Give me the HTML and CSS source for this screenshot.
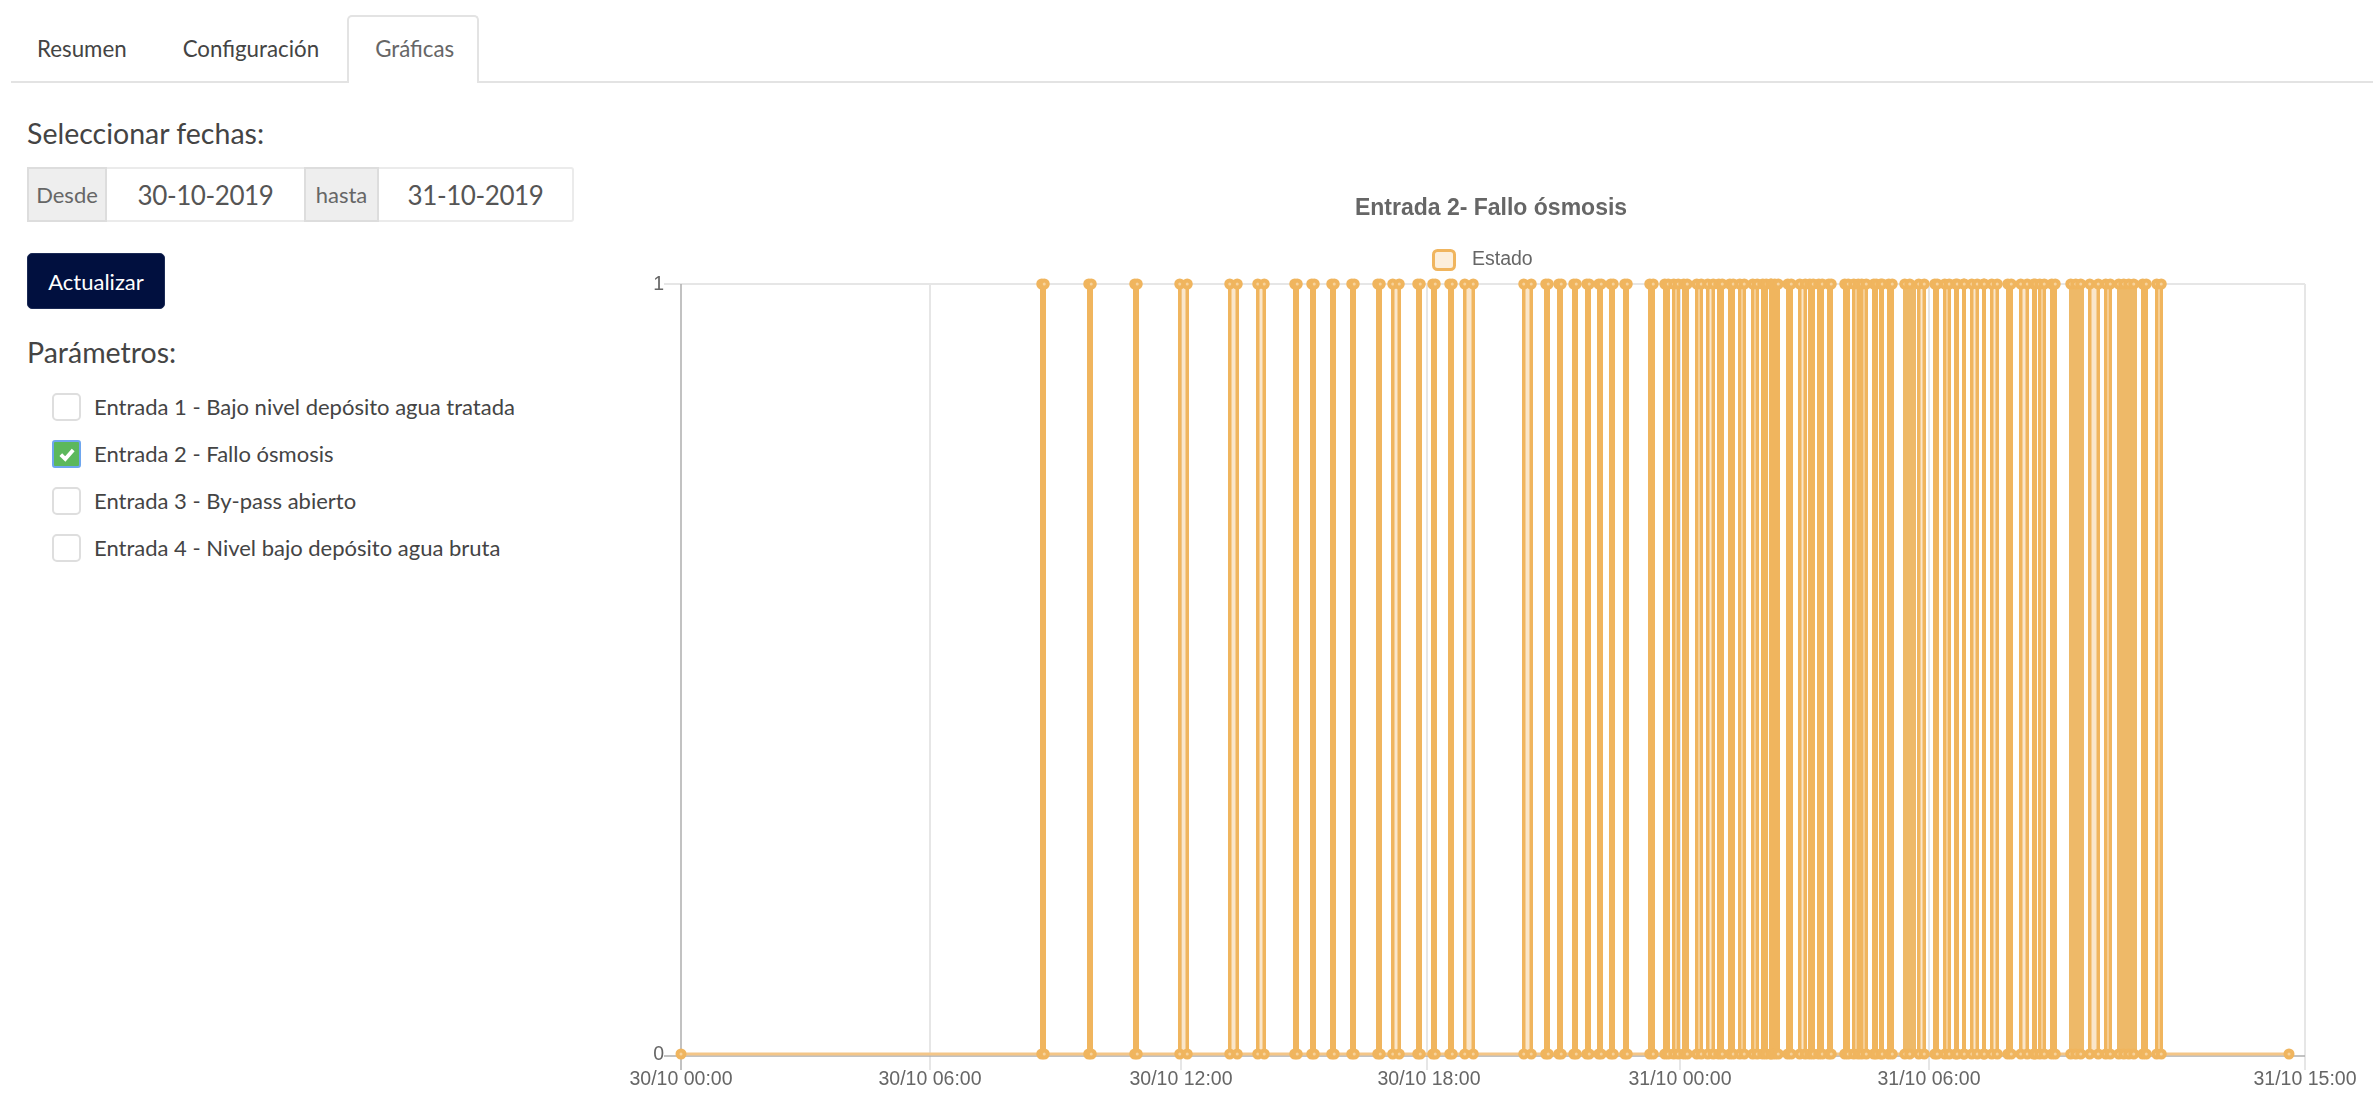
FILE: index.html
```html
<!DOCTYPE html>
<html lang="es">
<head>
<meta charset="utf-8">
<title>Gráficas</title>
<link rel="stylesheet" href="styles.css">
</head>
<body>
<nav class="tabs">
  <a class="tab tab-first">Resumen</a>
  <a class="tab">Configuración</a>
  <a class="tab tab-active">Gráficas</a>
</nav>
<main class="content">
  <section class="side">
    <h2 class="side-title">Seleccionar fechas:</h2>
    <div class="range">
      <span class="addon addon-first">Desde</span>
      <span class="date date-first">30-10-2019</span>
      <span class="addon addon-second">hasta</span>
      <span class="date date-second">31-10-2019</span>
    </div>
    <button class="btn" type="button">Actualizar</button>
    <h2 class="side-title params-title">Parámetros:</h2>
    <ul class="params">
      <li class="param"><span class="check"></span>Entrada 1 - Bajo nivel depósito agua tratada</li>
      <li class="param"><span class="check check-on"><svg class="tick" viewBox="0 0 16 16"><path d="M2.5 8.5 6.5 12.5 13.5 4.5"/></svg></span>Entrada 2 - Fallo ósmosis</li>
      <li class="param"><span class="check"></span>Entrada 3 - By-pass abierto</li>
      <li class="param"><span class="check"></span>Entrada 4 - Nivel bajo depósito agua bruta</li>
    </ul>
  </section>
  <section class="chart-wrap">
    <svg class="chart" id="chart" viewBox="590 190 1783 929" width="1783" height="929">
      <g class="grid">
        <path d="M664 284H2305M930 284V1070M1181 284V1070M1427 284V1070M1680 284V1070M1929 284V1070M2305 284V1070"/>
      </g>
      <g class="axis">
        <path d="M681 284V1070M664 1056H2305"/>
      </g>
      <g id="series"></g>
      <text class="chart-title" x="1491" y="215">Entrada 2- Fallo ósmosis</text>
      <rect class="legend-box" x="1433.500" y="250.500" width="21" height="19" rx="4"/>
      <text class="tick-label legend-label" x="1472" y="265">Estado</text>
      <text class="tick-label y-label" x="664" y="290">1</text>
      <text class="tick-label y-label" x="664" y="1060">0</text>
      <text class="tick-label x-label" x="681" y="1085">30/10 00:00</text>
      <text class="tick-label x-label" x="930" y="1085">30/10 06:00</text>
      <text class="tick-label x-label" x="1181" y="1085">30/10 12:00</text>
      <text class="tick-label x-label" x="1429" y="1085">30/10 18:00</text>
      <text class="tick-label x-label" x="1680" y="1085">31/10 00:00</text>
      <text class="tick-label x-label" x="1929" y="1085">31/10 06:00</text>
      <text class="tick-label x-label" x="2305" y="1085">31/10 15:00</text>
    </svg>
  </section>
</main>
<script src="chart.js"></script>
</body>
</html>
```

FILE: styles.css
```css
* { box-sizing: border-box; }
html, body { margin: 0; padding: 0; background: #fff; }
body {
  width: 2373px;
  height: 1119px;
  overflow: hidden;
  font-family: "Lato", "Noto Sans", sans-serif;
  color: #333;
}
.tabs {
  display: flex;
  height: 83px;
  margin-left: 11px;
  padding-top: 15px;
  border-bottom: 2px solid #e3e3e3;
}
.tab {
  display: flex;
  align-items: center;
  height: 68px;
  padding: 0 26px 3px;
  font-size: 22.300px;
  color: #444;
  border: 2px solid transparent;
  border-bottom: 0;
}
.tab-first { margin-left: -2px; }
.tab-active {
  padding-right: 23px;
  background: #fff;
  color: #666;
  border-color: #e3e3e3;
  border-radius: 5px 5px 0 0;
}
.content { display: flex; }
.side { width: 590px; flex: none; padding: 34px 0 0 27px; }
.side-title {
  margin: 0;
  font-size: 28.500px;
  line-height: 32px;
  font-weight: 400;
  color: #444;
}
.range {
  display: flex;
  width: 547px;
  height: 55px;
  margin-top: 18px;
  border: 2px solid #ebebeb;
  border-radius: 3px;
}
.addon {
  display: flex;
  align-items: center;
  justify-content: center;
  height: 55px;
  margin-top: -2px;
  background: #eee;
  border: 2px solid #ddd;
  font-size: 22px;
  color: #666;
}
.addon-first { width: 80px; margin-left: -2px; }
.addon-second { width: 75px; }
.date {
  display: flex;
  align-items: center;
  justify-content: center;
  font-size: 26px;
  letter-spacing: -.4px;
  color: #555;
}
.date-first { width: 197px; }
.date-second { flex: 1; }
.btn {
  display: block;
  width: 138px;
  height: 56px;
  margin-top: 31px;
  background: #01103f;
  color: #fff;
  border: 1px solid #1b2a55;
  border-radius: 5px;
  font: inherit;
  font-size: 22px;
}
.params-title { margin-top: 27px; }
.params { list-style: none; margin: 15px 0 0; padding: 0 0 0 25px; }
.param {
  display: flex;
  align-items: center;
  gap: 13px;
  height: 47px;
  font-size: 22px;
  color: #444;
}
.check {
  display: flex;
  align-items: center;
  justify-content: center;
  width: 29px;
  height: 28px;
  border: 2px solid #dedede;
  border-radius: 5px;
  background: #fff;
}
.check-on { background: #5cb85c; border-color: #6ea6ef; border-radius: 3px; }
.tick { width: 18px; height: 18px; fill: none; stroke: #fff; stroke-width: 3.4; }
.chart-wrap { flex: 1; padding-top: 107px; }
.chart { display: block; filter: blur(.5px); }
.grid path { fill: none; stroke: #e6e6e6; stroke-width: 2; }
.axis path { fill: none; stroke: #aeaeae; stroke-width: 1.500; }
.pulse { fill: rgba(240, 173, 78, .3); stroke: #f0b55e; stroke-width: 3.5; }
.block { fill: #eeb968; stroke: #eeb968; stroke-width: 3.5; }
.baseline { fill: none; stroke: #f4c688; stroke-width: 3; }
.dot { fill: #f7d39d; stroke: #f0b55e; stroke-width: 4; }
.chart-title { font: 700 23px "Liberation Sans", sans-serif; fill: #666; text-anchor: middle; }
.tick-label { font: 400 19.500px "Liberation Sans", sans-serif; fill: #666; }
.y-label { text-anchor: end; }
.x-label { text-anchor: middle; }
.legend-box { fill: #fcefdc; stroke: #f0b55e; stroke-width: 3; }
```

FILE: chart.js
```js
(function () {
  var NS = "http://www.w3.org/2000/svg";
  var TOP = 284, BOTTOM = 1054, W = 1.75;
  var pulses = [
    [1040,1046],[1087,1093],[1133,1139],[1178,1189],[1228,1239],[1256,1266],[1293,1299],[1310,1316],
    [1330,1336],[1350,1356],[1376,1382],[1391,1401],[1416,1422],[1431,1437],[1448,1454],[1463,1475],
    [1522,1533],[1544,1550],[1557,1563],[1572,1578],[1585,1591],[1597,1603],[1609,1615],[1623,1629],
    [1648,1655],[1663,1670],[1672,1680],[1682,1689],[1695,1703],[1706,1715],[1717,1724],[1728,1735],
    [1738,1746],[1751,1759],[1761,1768],[1769,1773],[1773,1780],[1786,1793],[1798,1807],[1808,1815],
    [1817,1824],[1827,1833],[1843,1850],[1852,1860],[1860,1868],[1872,1878],[1879,1884],[1887,1894],
    [1917,1926],[1933,1939],[1943,1951],[1954,1959],[1962,1966],[1970,1979],[1982,1986],[1990,1999],
    [2006,2013],[2019,2029],[2032,2037],[2038,2046],[2050,2057],[2088,2100],[2104,2112],[2141,2148],[2155,2163]
  ];
  var blocks = [[1903,1916],[2069,2084],[2117,2137]];
  var series = document.getElementById("series");

  function add(tag, cls, attrs) {
    var el = document.createElementNS(NS, tag);
    el.setAttribute("class", cls);
    for (var k in attrs) el.setAttribute(k, attrs[k]);
    series.appendChild(el);
  }
  function dot(x, y) { add("circle", "dot", { cx: x, cy: y, r: 3.5 }); }

  add("path", "baseline", { d: "M681 " + BOTTOM + "H2289" });
  pulses.forEach(function (p) {
    var a = p[0] + W, b = p[1] - W;
    add("path", "pulse", { d: "M" + a + " " + BOTTOM + "V" + TOP + "H" + b + "V" + BOTTOM + "Z" });
  });
  blocks.forEach(function (p) {
    add("path", "block", { d: "M" + (p[0] + W) + " " + BOTTOM + "V" + TOP + "H" + (p[1] - W) + "V" + BOTTOM + "Z" });
  });
  pulses.forEach(function (p) {
    var a = p[0] + W, b = p[1] - W;
    [TOP, BOTTOM].forEach(function (y) { dot(a, y); dot(b, y); });
  });
  blocks.forEach(function (p) {
    for (var x = p[0] + W; x <= p[1] - W; x += 5) { dot(x, TOP); dot(x, BOTTOM); }
  });
  dot(681, BOTTOM);
  dot(2289, BOTTOM);
})();
```
